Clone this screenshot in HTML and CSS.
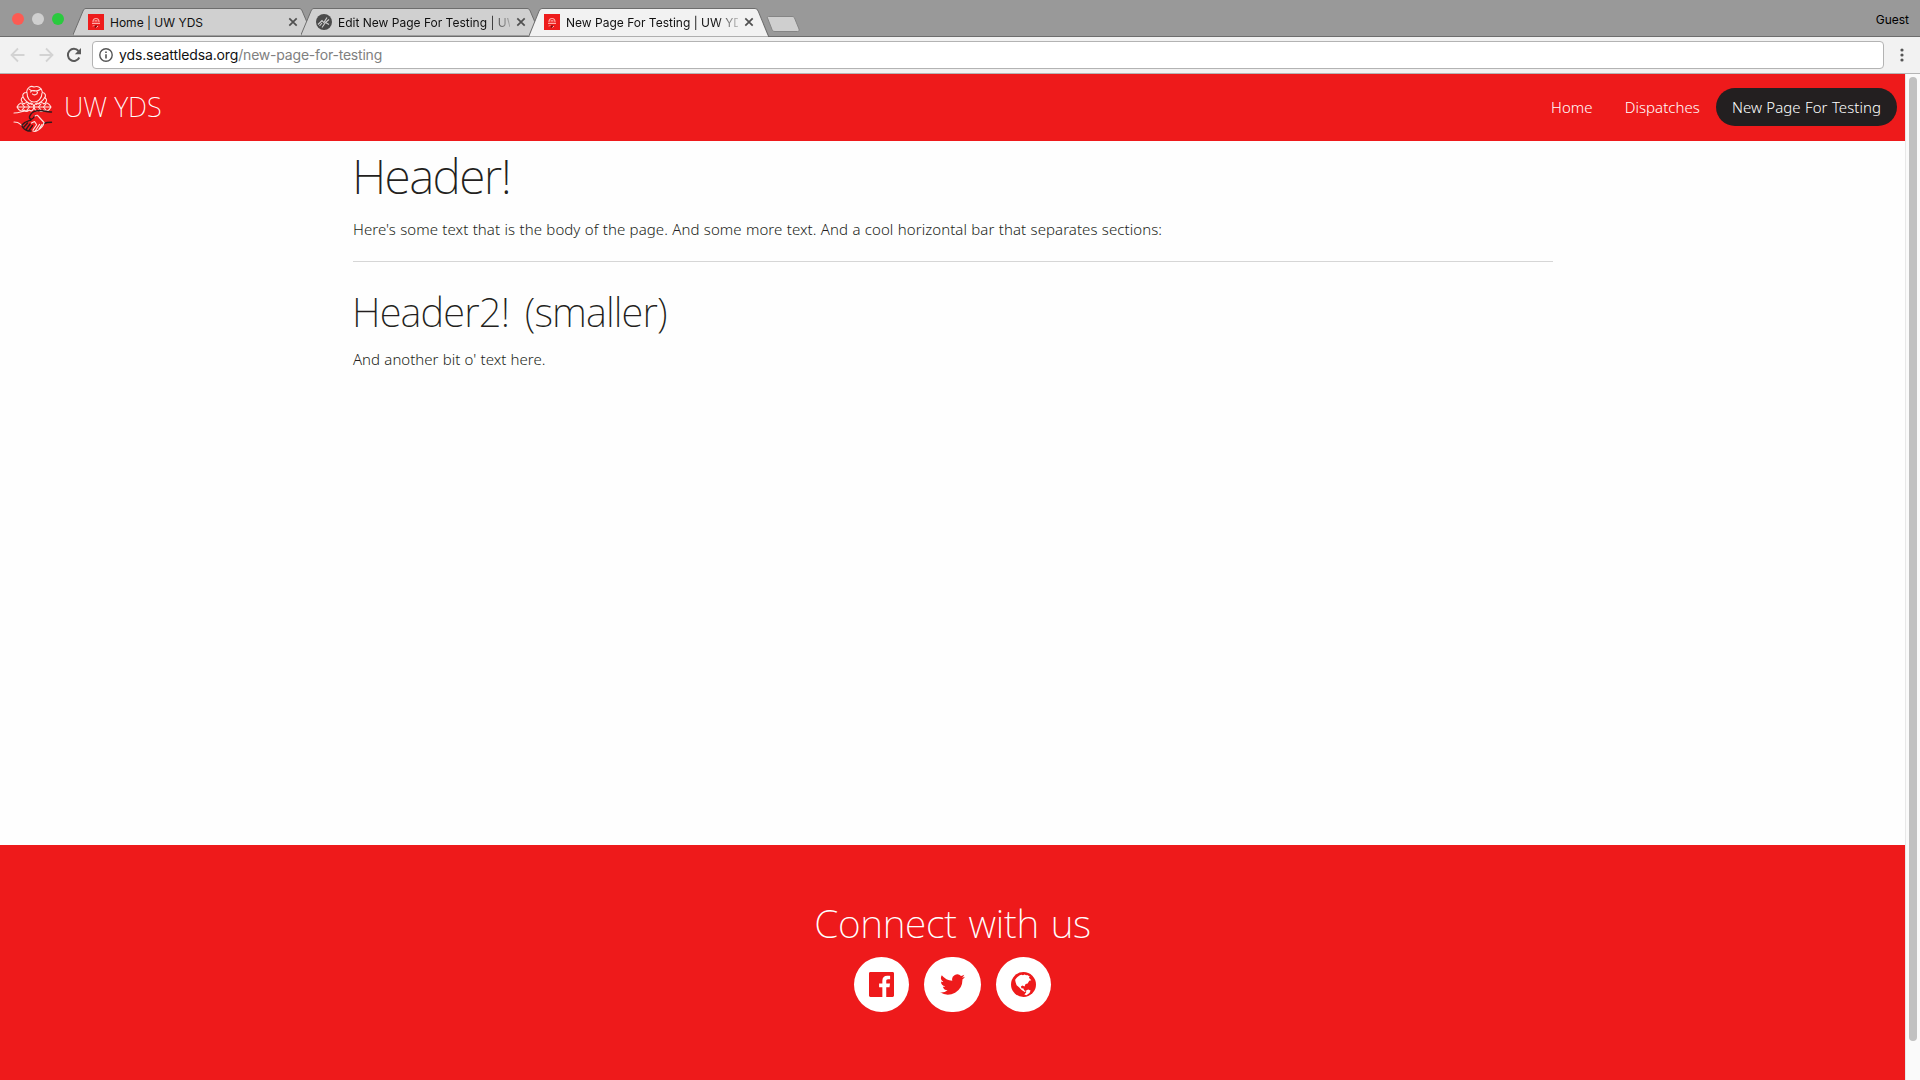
FILE: index.html
```html
<!DOCTYPE html>
<html lang="en">
<head>
<meta charset="utf-8">
<title>New Page For Testing | UW YDS</title>
<link rel="stylesheet" href="styles.css">
</head>
<body>
<svg width="0" height="0" class="defs">
  <symbol id="rose" viewBox="0 0 16 16"><path fill="#ee1c1c" d="M0 0h16v16H0z"/><path d="M5 8c0-2 1-3.500 3-3.500S11 6 11 8M4 9.300h8M6.500 6.800h3" fill="none" stroke="#ffaaa6" stroke-width="1.200"/><path d="M4.500 12l2-.5" stroke="#f88" fill="none"/><path d="M7 13.500l1.500-2" stroke="#6b1515" stroke-width="1.300"/><path d="M8.500 13.500l1.500-1.500" stroke="#fbb"/></symbol>
  <symbol id="tabshape" viewBox="0 0 241 28" preserveAspectRatio="none"><path d="M-.5 28L10 3C10.800 1.200 11.500.5 13 .5H226c1.700 0 2.500.8 3.200 2.500L239 26c.4 1.200 1 2 2 2z"/></symbol>
  <symbol id="x" viewBox="0 0 10 10"><path d="M1.300 1.300l7.400 7.400M8.700 1.300L1.300 8.700" stroke="#505050" stroke-width="1.700" fill="none"/></symbol>
</svg>

<header class="tabstrip">
  <div class="lights"><i class="red"></i><i class="grey"></i><i class="green"></i></div>
  <div class="tab">
    <svg class="shape"><use href="#tabshape"/></svg>
    <svg class="fav"><use href="#rose"/></svg>
    <span class="title">Home | UW YDS</span>
    <svg class="close"><use href="#x"/></svg>
  </div>
  <div class="tab">
    <svg class="shape"><use href="#tabshape"/></svg>
    <svg class="fav" viewBox="0 0 16 16"><circle cx="8" cy="8" r="8" fill="#4a4a4a"/><path d="M2 10.500l4-4 1.800 2L11 3.500M6 13.500l3.500-5L13 10.500M9.500 8.500L13 5.500M3.500 12l2.500-3" fill="none" stroke="#d0d0d0" stroke-width="1.100"/></svg>
    <span class="title fade">Edit New Page For Testing | UW</span>
    <svg class="close"><use href="#x"/></svg>
  </div>
  <div class="tab active">
    <svg class="shape"><use href="#tabshape"/></svg>
    <svg class="fav"><use href="#rose"/></svg>
    <span class="title fade">New Page For Testing | UW YD</span>
    <svg class="close"><use href="#x"/></svg>
  </div>
  <svg class="newtab" viewBox="0 0 34 17"><path d="M2.500.5H26c1.500 0 2 .5 2.500 1.500l4.500 11c.5 1.500 0 2.500-1.500 2.500H9c-1.500 0-2.500-.5-3-2L1.500 2c-.4-1 0-1.500 1-1.500z" fill="#cfcfcf" stroke="#858585"/></svg>
  <span class="guest">Guest</span>
</header>

<div class="toolbar">
  <svg class="tool" viewBox="0 0 16 16"><path d="M14.500 8H2M8 1.500L1.500 8 8 14.500" fill="none" stroke="#d3d3d3" stroke-width="1.800"/></svg>
  <svg class="tool" viewBox="0 0 16 16"><path d="M1.500 8H14M8 1.500L14.500 8 8 14.500" fill="none" stroke="#d3d3d3" stroke-width="1.800"/></svg>
  <svg class="tool" viewBox="0 0 16 16"><path d="M13.300 10.500A6 6 0 1 1 12.500 4" fill="none" stroke="#5a5a5a" stroke-width="2"/><path d="M15 1v6.200H8.800z" fill="#5a5a5a"/></svg>
  <div class="address">
    <svg class="info" viewBox="0 0 14 14"><circle cx="7" cy="7" r="6.200" fill="none" stroke="#555" stroke-width="1.400"/><path d="M7 6.200v4.300M7 3.400v1.600" stroke="#555" stroke-width="1.600"/></svg>
    <span class="url">yds.seattledsa.org<em>/new-page-for-testing</em></span>
  </div>
  <svg class="dots" viewBox="0 0 4 14"><circle cx="2" cy="2" r="1.600"/><circle cx="2" cy="7" r="1.600"/><circle cx="2" cy="12" r="1.600"/></svg>
</div>

<div class="viewport">
  <div class="page">
    <nav class="navbar">
      <svg class="logo" viewBox="0 0 40 50" fill="none" stroke-linecap="round" stroke-linejoin="round">
        <g stroke="#ffe3e0" stroke-width="1.100">
          <path d="M9.500 19c-2-1.500-1.500-4 .5-5-1-3 1-4.500 3.500-4.500C14 4 18 2.500 21 4c4-1.500 8 1 8.500 5.500 3 .5 3.500 3 2.500 5.500 2 1 2 3 .5 4.500"/>
          <path d="M14 9.500c0 6 3 9.500 7 9.500s8-3.500 8-9M16 6c2 2.500 8 3 12 0M17.500 9c2-2 6-2 7 .5 0 2.500-4 3-5 1.500M10 14c2 4 5 6 9 7.500M32 14c-2 4-5 6-9 7.500"/>
          <path d="M4 24h34M4 24c2-4 5-5 7-3 2-2 4-2 5 0 2-1.500 4-1.500 5 3 1-4.500 3-4.500 5-3 1-2 3-2 5 0 2-2 5-1 7 3-2 4-5 5-7 3-2 2-4 2-5 0-2 1.500-4 1.500-5-3-1 4.500-3 4.500-5 3-1 2-3 2-5 0-2 2-5 1-7-3z"/>
          <path d="M9 21l2.500 3L9 27M14 21l2.500 3-2.500 3M33 21l-2.500 3 2.500 3M28 21l-2.500 3 2.500 3"/>
          <path d="M1 30c6 0 8-2 14-2.500M1 39c5 0 5 1 8 3.500"/>
        </g>
        <path d="M38.500 29c-5 .3-7-1.500-11-1.500-5 0-8 1-9.500 3.500-1.500 2-2.500 4-.5 5s3-1 4.500-3.500M38.500 39.300c-4 0-5 0-7.500 1.200" stroke="#33191b" stroke-width="1.400"/>
        <path d="M18 37c-3 1-6 1.500-9 5 0 3 2 4 4 5s3 1.500 5 1M10.500 44.500l4-4.500M13 46.500l4-5.500M16 47.500l3.500-5" stroke="#33191b" stroke-width="1.400"/>
        <path d="M22 33c2-1.500 3-.5 4 1l5 5.500c-.5 3-3 6-6.500 8-2 1-3.500 1-4.500.5M20 47l3.500-5M22.500 47.500l4-6M26 46l3-4.500M18.500 40l3-1.500 2 3" stroke="#ffe3e0" stroke-width="1.200"/>
      </svg>
      <a class="brand">UW YDS</a>
      <div class="links"><a>Home</a><a>Dispatches</a><a class="current">New Page For Testing</a></div>
    </nav>
    <main class="content">
      <h1>Header!</h1>
      <p class="intro">Here's some text that is the body of the page. And some more text. And a cool horizontal bar that separates sections:</p>
      <hr>
      <h2>Header2! (smaller)</h2>
      <p class="outro">And another bit o' text here.</p>
    </main>
    <footer class="footer">
      <h2>Connect with us</h2>
      <div class="social">
        <a><svg viewBox="0 0 24 24"><path d="M22.676 0H1.324C.593 0 0 .593 0 1.324v21.352C0 23.408.593 24 1.324 24h11.494v-9.294H9.689v-3.621h3.129V8.410c0-3.099 1.894-4.785 4.659-4.785 1.325 0 2.464.097 2.796.141v3.240h-1.921c-1.500 0-1.792.721-1.792 1.771v2.311h3.584l-.465 3.630H16.560V24h6.115c.733 0 1.325-.592 1.325-1.324V1.324C24 .593 23.408 0 22.676 0"/></svg></a>
        <a class="wide"><svg class="bird" viewBox="0 2 24 20"><path d="M24 4.600a10 10 0 0 1-2.800.8 4.900 4.900 0 0 0 2.100-2.700 10 10 0 0 1-3.100 1.200 4.900 4.900 0 0 0-8.400 4.500A14 14 0 0 1 1.700 3.200a4.900 4.900 0 0 0 1.500 6.500 4.900 4.900 0 0 1-2.200-.6 4.900 4.900 0 0 0 4 4.900 5 5 0 0 1-2.300.1 4.900 4.900 0 0 0 4.600 3.400A9.900 9.900 0 0 1 0 19.500 14 14 0 0 0 21.500 7.100 10 10 0 0 0 24 4.600z"/></svg></a>
        <a><svg viewBox="0 0 24 24"><circle cx="12" cy="12" r="12"/><path fill="#fff" d="M4 7.500C5.500 5 7.500 3.300 10 2.600l1.500.6 1.500-.7 1.500.7 1-.4L18 4.200l-.8 1.200L19.500 8l-2 .5-1.500 2.500-2 .5-1 2.500-2-1-1.500.8.5 1.700 2 .3.500 1.700 1.700.8-1 .8-3-1.800-2.500-2.600-2.300-2C4.500 10.500 4.200 9 4 7.500zM14.500 17.700l2-.8 2.300.8-1 2.500-3 2-2-.5 1.700-2z"/></svg></a>
      </div>
    </footer>
  </div>
  <div class="scrollbar"><div class="thumb"></div></div>
</div>
</body>
</html>
```
FILE: styles.css
```css
* { box-sizing: border-box; }
body { margin: 0; width: 1920px; height: 1080px; overflow: hidden; display: flex; flex-direction: column; font-family: "Noto Sans", sans-serif; background: #fefefe; }
svg { display: block; flex: none; }
.defs { position: absolute; }

.tabstrip { height: 37px; flex: none; display: flex; align-items: flex-end; background: #999; border-bottom: 1px solid #6d6d6d; font-family: Inter, sans-serif; }
.lights { display: flex; gap: 8px; width: 73px; padding-left: 12px; height: 23px; }
.lights i { width: 12px; height: 12px; border-radius: 50%; }
.red { background: #fc5b53; }
.grey { background: #cfcfcf; }
.green { background: #2aca3e; }
.tab { position: relative; display: flex; align-items: center; width: 241px; height: 28px; margin-right: -13px; padding: 0 16px 0 15px; }
.shape { position: absolute; left: 0; top: 0; width: 241px; height: 28px; fill: #d0d0d0; stroke: #6d6d6d; overflow: visible; }
.shape use { overflow: visible; }
.active { z-index: 2; height: 29px; margin-bottom: -1px; padding-bottom: 1px; }
.active .shape { height: 29px; fill: #f2f2f2; clip-path: inset(-1px 0 0 0); }
.fav { position: relative; width: 16px; height: 16px; margin-right: 6px; }
.title { position: relative; width: 172px; white-space: nowrap; font-size: 12px; line-height: 16px; padding-top: 1px; color: #111; letter-spacing: 0; }
.fade { -webkit-mask-image: linear-gradient(90deg, #000 150px, transparent 178px); mask-image: linear-gradient(90deg, #000 150px, transparent 178px); }
.close { position: relative; width: 10px; height: 10px; margin-left: 6px; }
.newtab { width: 34px; height: 17px; margin: 0 0 3px 9px; }
.guest { margin: 0 11px 8px auto; font-size: 12px; line-height: 16px; }

.toolbar { height: 37px; flex: none; display: flex; align-items: center; background: #f2f2f2; border-bottom: 1px solid #b5b5b5; padding-left: 10px; }
.tool { width: 16px; height: 16px; margin-right: 12px; }
.address { width: 1792px; height: 28px; margin-left: -2px; display: flex; align-items: center; padding-left: 6px; border: 1px solid #b3b3b3; border-radius: 4px; background: #fff; }
.info { width: 14px; height: 14px; }
.url { margin-left: 6px; font: 14px/20px Inter, sans-serif; color: #111; letter-spacing: -.12px; }
.url em { font-style: normal; color: #808080; letter-spacing: -.2px; }
.dots { width: 4px; height: 14px; margin-left: 16px; fill: #555; }

.viewport { flex: 1; display: flex; min-height: 0; }
.page { width: 1905px; display: flex; flex-direction: column; }
.navbar { height: 67px; flex: none; display: flex; align-items: center; background: #ee1a1b; padding: 0 8px 1px 13px; }
.logo { width: 40px; height: 50px; margin-top: 1px; }
.brand { margin: -1px 0 0 11px; color: #fff; font-size: 27px; font-weight: 200; line-height: 40px; }
.links { display: flex; margin-left: auto; }
.links a { height: 38px; display: flex; align-items: center; padding: 0 16px; border-radius: 19px; color: #fff; font-size: 15px; font-weight: 300; letter-spacing: .05px; word-spacing: .4px; white-space: nowrap; }
.links .current { background: #231f20; }
.content { flex: 1; width: 1200px; margin-left: 353px; color: #231f20; }
h1, h2, p { margin: 0; font-weight: 200; white-space: nowrap; }
h1 { font-size: 48px; line-height: 70px; letter-spacing: -1.6px; margin-left: -1px; }
.content h2 { font-size: 40px; line-height: 60px; margin: 20px 0 0 -1px; letter-spacing: -.85px; word-spacing: 6px; }
p { font-size: 15px; font-weight: 300; line-height: 24px; letter-spacing: .06px; word-spacing: .4px; }
.intro { margin-top: 6px; }
.outro { margin-top: 5px; letter-spacing: 0; }
hr { border: 0; height: 1px; background: #d6d6d6; margin: 20px 0 0; }
.footer { height: 235px; flex: none; background: #ee1a1b; display: flex; flex-direction: column; align-items: center; padding-top: 50px; }
.footer h2 { color: #fff; font-size: 39px; line-height: 56px; letter-spacing: -.3px; word-spacing: 2px; }
.social { display: flex; gap: 15px; margin-top: 6px; }
.social a { width: 55px; height: 55px; border-radius: 28px; background: #fff; display: flex; align-items: center; justify-content: center; }
.social .wide { width: 57px; }
.social svg { width: 25px; height: 25px; fill: #ee1a1b; margin-top: -1px; }
.social .bird { height: 21px; }
.scrollbar { width: 15px; background: #fafafa; border-left: 1px solid #e8e8e8; padding: 3px 0 0 3px; }
.thumb { width: 8px; height: 964px; border-radius: 4px; background: #c1c1c1; }
```
